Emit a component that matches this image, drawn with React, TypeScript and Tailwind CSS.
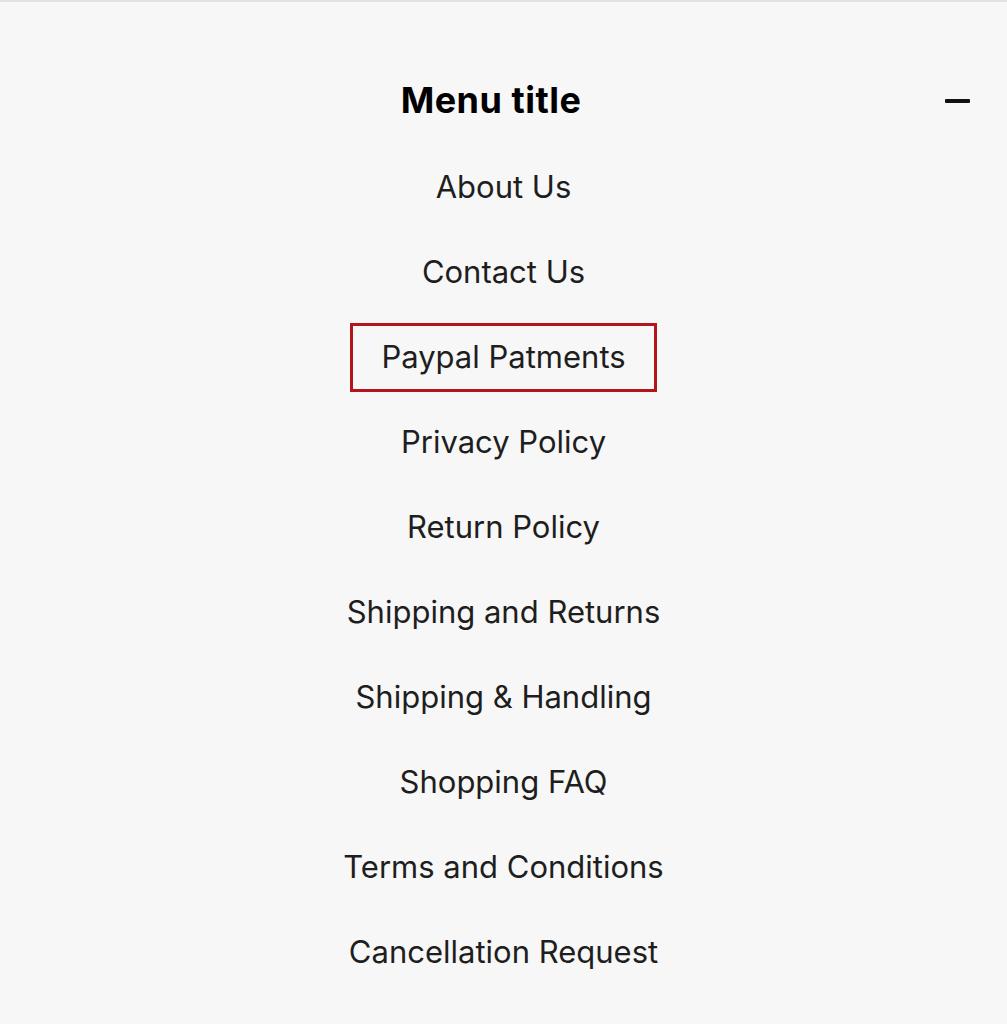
import React from "react";

const items = [
  "About Us",
  "Contact Us",
  "Paypal Patments",
  "Privacy Policy",
  "Return Policy",
  "Shipping and Returns",
  "Shipping & Handling",
  "Shopping FAQ",
  "Terms and Conditions",
  "Cancellation Request",
];

export default function App() {
  return (
    <div
      className="w-[1007px] h-[1024px] bg-[#f7f7f7] border-t-2 border-[#e2e2e2] overflow-hidden"
      style={{ fontFamily: "Inter, 'Liberation Sans', sans-serif" }}
    >
      <div className="relative h-[142px] flex items-center justify-center pt-[57px] pb-[4px]">
        <h2 className="text-[36px] font-bold text-black tracking-[0.5px] mr-[25px] leading-none">Menu title</h2>
        <span className="absolute right-[37px] top-[97px] w-[25px] h-[4px] bg-[#111] rounded-[1px]" />
      </div>
      <ul className="flex flex-col items-center">
        {items.map((t) => (
          <li key={t} className="h-[85px] flex items-center justify-center">
            <span
              className={
                "text-[31px] text-[#1e1e1e] leading-none px-[28px] pt-[15px] pb-[17px] mt-[1px] " +
                (t === "Paypal Patments" ? "border-[3px] border-[#b4141b]" : "border-[3px] border-transparent")
              }
            >
              {t}
            </span>
          </li>
        ))}
      </ul>
    </div>
  );
}
